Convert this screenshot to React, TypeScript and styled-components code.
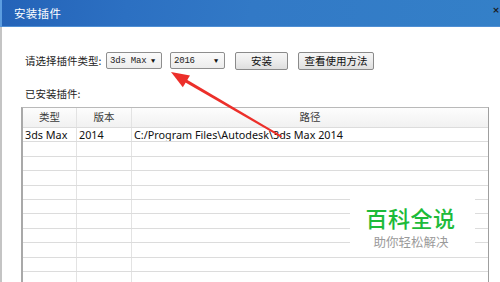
import React from 'react';
import styled, { createGlobalStyle } from 'styled-components';

const GlobalStyle = createGlobalStyle`
  html, body {
    margin: 0;
    padding: 0;
    background: #fff;
    overflow: hidden;
  }
  body {
    font-family: "Noto Sans CJK SC", "Noto Sans", sans-serif;
  }
`;

const Window = styled.div`
  position: relative;
  width: 500px;
  height: 282px;
  overflow: hidden;
  background: #fff;
`;

const TitleBar = styled.div`
  height: 26px;
  display: flex;
  align-items: center;
  justify-content: space-between;
  padding: 0 0 0 12px;
  background: linear-gradient(100deg, #2463b8 0%, #2c70c2 25%, #3279c6 50%, #3480c8 100%);
  border-bottom: 1px solid #4f8fd4;
  border-left: 2px solid #5c9de0;
  color: #fff;
  font-size: 11.5px;
  letter-spacing: 0.3px;
`;

const Close = styled.span`
  font-family: "DejaVu Sans", sans-serif;
  color: #1a1a1a;
  font-size: 9px;
  font-weight: bold;
  margin-right: 0;
  margin-top: -6px;
`;

const Body = styled.div`
  height: 255px;
  border-left: 2px solid #c4c4c4;
  padding: 25px 0 0 19px;
  display: flex;
  flex-direction: column;
`;

const ControlRow = styled.div`
  display: flex;
  align-items: center;
  height: 17px;
  margin-left: 4px;
`;

const Label = styled.span`
  font-size: 10.5px;
  color: #222;
  line-height: 14px;
  width: 81px;
  white-space: nowrap;
`;

const Combo = styled.div<{ $w: number }>`
  box-sizing: border-box;
  width: ${p => p.$w}px;
  height: 17px;
  margin-right: 8px;
  border: 1px solid #8e8e8e;
  border-radius: 2px;
  background: linear-gradient(#fbfbfb, #ececec);
  display: flex;
  align-items: center;
  justify-content: space-between;
  padding: 0 6px 0 3px;
  font-family: "Liberation Mono", monospace;
  font-size: 9px;
  color: #222;
  letter-spacing: -0.2px;
`;

const Caret = styled.span`
  font-size: 7px;
  color: #111;
`;

const Button = styled.div<{ $w: number }>`
  box-sizing: border-box;
  width: ${p => p.$w}px;
  height: 18px;
  margin-left: 2px;
  margin-right: 8px;
  border: 1px solid #8a8a8a;
  border-radius: 2px;
  background: linear-gradient(#f6f6f6 0%, #ececec 50%, #dedede 100%);
  display: flex;
  align-items: center;
  justify-content: center;
  font-size: 10.5px;
  color: #111;
`;

const Installed = styled(Label)`
  margin: 18px 0 6px 4px;
`;

const Table = styled.div`
  width: 468px;
  box-sizing: border-box;
  border-top: 1px solid #b9b9b9;
  border-left: 2px solid #a9a9a9;
  border-right: 1px solid #9f9f9f;
`;

const Row = styled.div<{ $head?: boolean }>`
  display: grid;
  grid-template-columns: 54px 55px 1fr;
  box-sizing: border-box;
  height: ${p => (p.$head ? '20px' : '14.4px')};
  border-bottom: 1px solid #dcdcdc;
  background: ${p => (p.$head ? 'linear-gradient(#fdfdfd, #f1f1f1)' : '#fff')};
`;

const Cell = styled.div<{ $head?: boolean }>`
  border-right: 1px solid #e3e3e3;
  font-family: "Noto Sans", "Noto Sans CJK SC", sans-serif;
  font-size: ${p => (p.$head ? '10.5px' : '10.8px')};
  color: ${p => (p.$head ? '#3a3a3a' : '#111')};
  text-align: ${p => (p.$head ? 'center' : 'left')};
  padding-left: ${p => (p.$head ? '0' : '2px')};
  line-height: ${p => (p.$head ? '19px' : '13px')};
  white-space: nowrap;
  overflow: hidden;
  &:last-child {
    border-right: none;
  }
`;

const Watermark = styled.div`
  position: absolute;
  left: 350px;
  top: 196px;
  width: 125px;
  height: 60px;
  background: #fff;
  display: flex;
  flex-direction: column;
  align-items: center;
  justify-content: center;
`;

const Brand = styled.div`
  font-size: 22px;
  line-height: 22px;
  font-weight: 500;
  color: #1dbb3a;
  letter-spacing: 0.5px;
  margin: 1px 0 0 -4px;
`;

const Slogan = styled.div`
  font-size: 12.5px;
  line-height: 13px;
  color: #9a9a9a;
  margin-top: 7px;
  margin-left: -3px;
`;

const Arrow = styled.svg`
  position: absolute;
  left: 0;
  top: 0;
  pointer-events: none;
`;

const rows = [
  ['3ds Max', '2014', 'C:/Program Files\\Autodesk\\3ds Max 2014'],
  ...Array.from({ length: 11 }, () => ['', '', '']),
];

export default function App() {
  return (
    <Window>
      <GlobalStyle />
      <TitleBar>
        <span>安装插件</span>
        <Close>×</Close>
      </TitleBar>
      <Body>
        <ControlRow>
          <Label>请选择插件类型:</Label>
          <Combo $w={56}>
            <span>3ds Max</span>
            <Caret>▼</Caret>
          </Combo>
          <Combo $w={55}>
            <span>2016</span>
            <Caret>▼</Caret>
          </Combo>
          <Button $w={53}>安装</Button>
          <Button $w={76}>查看使用方法</Button>
        </ControlRow>
        <Installed>已安装插件:</Installed>
        <Table>
          <Row $head>
            <Cell $head>类型</Cell>
            <Cell $head>版本</Cell>
            <Cell $head>路径</Cell>
          </Row>
          {rows.map((r, i) => (
            <Row key={i}>
              <Cell>{r[0]}</Cell>
              <Cell>{r[1]}</Cell>
              <Cell>{r[2]}</Cell>
            </Row>
          ))}
        </Table>
      </Body>
      <Watermark>
        <Brand>百科全说</Brand>
        <Slogan>助你轻松解决</Slogan>
      </Watermark>
      <Arrow width="500" height="282" viewBox="0 0 500 282">
        <path d="M184.6 81.9 L281 137.5 L282.2 136 L186.2 79.2 Z" fill="#ec2f2a" />
        <path d="M171 72 L182.8 87.2 L190 75.4 Z" fill="#ec2f2a" />
      </Arrow>
    </Window>
  );
}
